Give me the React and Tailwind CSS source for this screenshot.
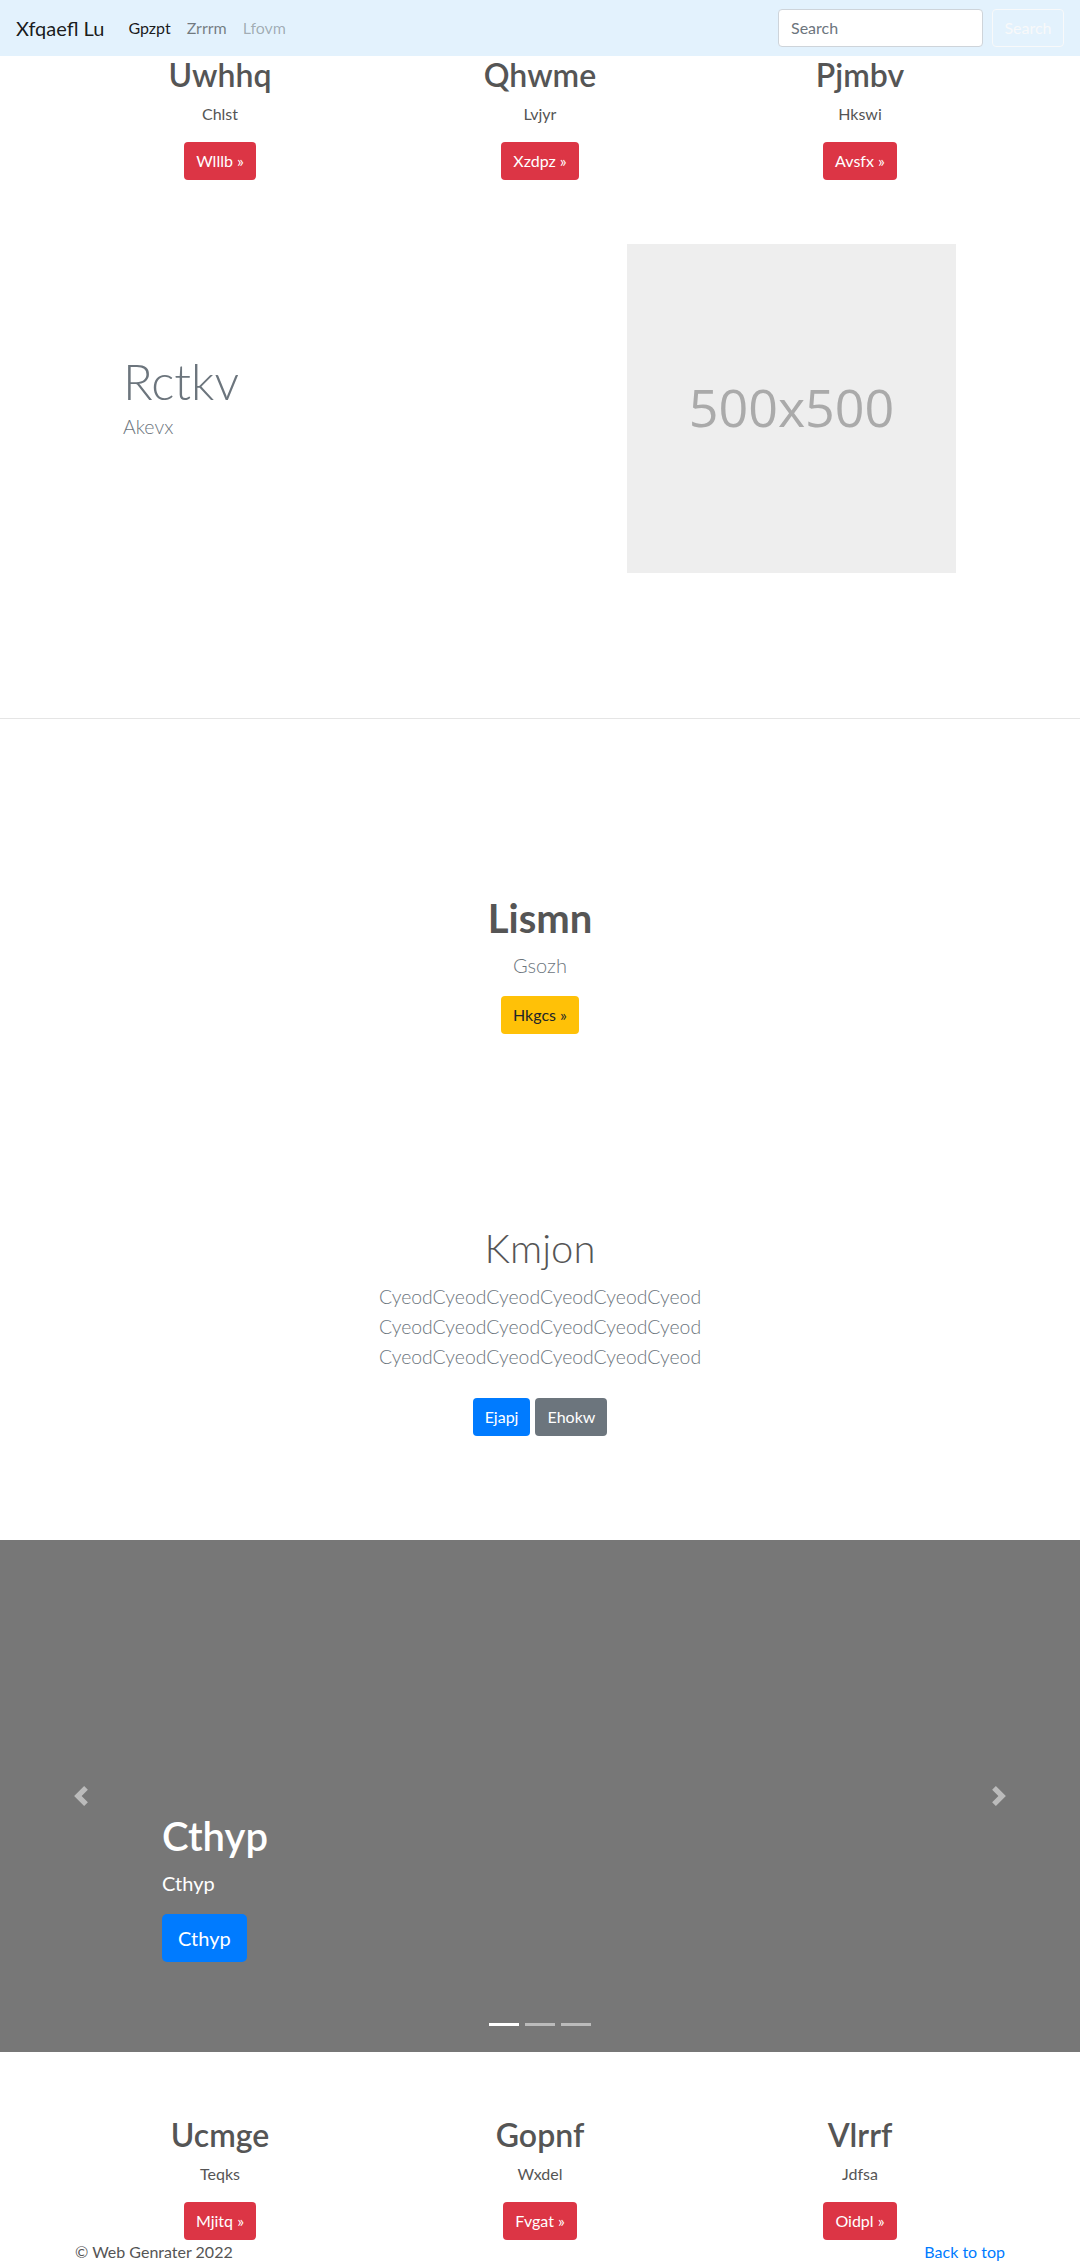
import React from "react";

const F = "font-['Lato','Noto_Sans',sans-serif]";

function Feature({ title, sub, btn }) {
  return (
    <div className="flex flex-col items-center px-[15px] text-center">
      <h2 className="text-[32px] leading-[38px] font-semibold text-[#555]">{title}</h2>
      <p className="mt-[8px] text-[16px] leading-[24px] text-[#555]">{sub}</p>
      <button className="mt-[16px] h-[38px] rounded-[4px] bg-[#dc3545] px-[12px] text-[16px] leading-[24px] text-white">
        {btn} »
      </button>
    </div>
  );
}

function Chevron({ dir }) {
  return (
    <svg width="20" height="20" viewBox="0 0 8 8" className="opacity-50">
      {dir === "left" ? (
        <path fill="#fff" d="M5.25 0l-4 4 4 4 1.5-1.5L4.25 4l2.5-2.5L5.25 0z" />
      ) : (
        <path fill="#fff" d="M2.75 0l-1.5 1.5L3.75 4l-2.5 2.5L2.75 8l4-4-4-4z" />
      )}
    </svg>
  );
}

export default function App() {
  return (
    <div className={`w-[1080px] h-[2263px] overflow-hidden bg-white ${F}`}>
      {/* Navbar */}
      <nav className="flex h-[56px] items-center bg-[#e3f2fd] pl-[16px] pr-[16px]">
        <span className="mr-[16px] text-[20px] leading-[30px] text-[rgba(0,0,0,0.9)]">Xfqaefl Lu</span>
        <div className="flex items-center text-[16px] leading-[24px]">
          <span className="px-[8px] text-[rgba(0,0,0,0.9)]">Gpzpt</span>
          <span className="px-[8px] text-[rgba(0,0,0,0.5)]">Zrrrm</span>
          <span className="px-[8px] text-[rgba(0,0,0,0.3)]">Lfovm</span>
        </div>
        <div className="ml-auto flex items-center gap-[9px]">
          <div className="flex h-[38px] w-[205px] items-center rounded-[4px] border border-[#ced4da] bg-white px-[12px] text-[16px] text-[#6c757d]">
            Search
          </div>
          <button className="h-[38px] w-[72px] rounded-[4px] border border-[#f8f9fa] text-[16px] text-[#f8f9fa]">
            Search
          </button>
        </div>
      </nav>

      {/* Top features */}
      <div className="mx-auto grid w-[960px] grid-cols-3">
        <Feature title="Uwhhq" sub="Chlst" btn="Wlllb" />
        <Feature title="Qhwme" sub="Lvjyr" btn="Xzdpz" />
        <Feature title="Pjmbv" sub="Hkswi" btn="Avsfx" />
      </div>

      {/* Featurette */}
      <div className="mt-[64px] flex items-start">
        <div className="ml-[123px] mt-[106px] w-[400px]">
          <h1 className="text-[49px] leading-[62px] font-light text-[#6c757d]">Rctkv</h1>
          <p className="text-[19.5px] leading-[30px] font-light text-[#6c757d]">Akevx</p>
        </div>
        <div className="ml-[104px] flex h-[329px] w-[329px] items-center justify-center bg-[#eeeeee]">
          <span className="-mt-[4px] font-['Open_Sans',sans-serif] text-[52px] text-[#aaaaaa]">500x500</span>
        </div>
      </div>

      <div className="mt-[145px] h-px w-full bg-[#e5e5e5]" />

      {/* Lismn */}
      <div className="mt-[175px] flex flex-col items-center text-center">
        <h1 className="text-[40px] leading-[48px] font-bold text-[#555]">Lismn</h1>
        <p className="mt-[8px] text-[20px] leading-[30px] font-light text-[#6c757d]">Gsozh</p>
        <button className="mt-[16px] h-[38px] rounded-[4px] bg-[#ffc107] px-[12px] text-[16px] leading-[24px] text-[#212529]">
          Hkgcs »
        </button>
      </div>

      {/* Kmjon */}
      <div className="mt-[190px] flex flex-col items-center text-center">
        <h1 className="text-[40px] leading-[48px] font-light text-[#555]">Kmjon</h1>
        <div className="mt-[10px] text-[19.4px] leading-[30px] font-light text-[#6c757d]">
          <p>CyeodCyeodCyeodCyeodCyeodCyeod</p>
          <p>CyeodCyeodCyeodCyeodCyeodCyeod</p>
          <p>CyeodCyeodCyeodCyeodCyeodCyeod</p>
        </div>
        <div className="mt-[26px] flex gap-[5px]">
          <button className="h-[38px] rounded-[4px] bg-[#007bff] px-[12px] text-[16px] leading-[24px] text-white">Ejapj</button>
          <button className="h-[38px] rounded-[4px] bg-[#6c757d] px-[12px] text-[16px] leading-[24px] text-white">Ehokw</button>
        </div>
      </div>

      {/* Carousel */}
      <div className="relative mt-[104px] h-[512px] w-full bg-[#777777]">
        <div className="absolute left-0 top-0 flex h-full w-[162px] items-center justify-center">
          <Chevron dir="left" />
        </div>
        <div className="absolute right-0 top-0 flex h-full w-[162px] items-center justify-center">
          <Chevron dir="right" />
        </div>
        <div className="absolute left-[162px] top-[272px] text-white">
          <h1 className="text-[40px] leading-[48px] font-semibold">Cthyp</h1>
          <p className="mt-[8px] text-[20px] leading-[30px]">Cthyp</p>
          <button className="mt-[16px] h-[48px] rounded-[5px] bg-[#007bff] px-[16px] text-[20px] leading-[30px] text-white">
            Cthyp
          </button>
        </div>
        <div className="absolute bottom-[26px] left-0 flex w-full justify-center">
          <span className="mx-[3px] h-[3px] w-[30px] bg-white" />
          <span className="mx-[3px] h-[3px] w-[30px] bg-white/50" />
          <span className="mx-[3px] h-[3px] w-[30px] bg-white/50" />
        </div>
      </div>

      {/* Bottom features */}
      <div className="mx-auto mt-[64px] grid w-[960px] grid-cols-3">
        <Feature title="Ucmge" sub="Teqks" btn="Mjitq" />
        <Feature title="Gopnf" sub="Wxdel" btn="Fvgat" />
        <Feature title="Vlrrf" sub="Jdfsa" btn="Oidpl" />
      </div>

      {/* Footer */}
      <div className="mx-auto flex w-[960px] justify-between px-[15px] text-[16px] leading-[24px]">
        <span className="text-[#555]">© Web Genrater 2022</span>
        <span className="text-[#007bff]">Back to top</span>
      </div>
    </div>
  );
}
